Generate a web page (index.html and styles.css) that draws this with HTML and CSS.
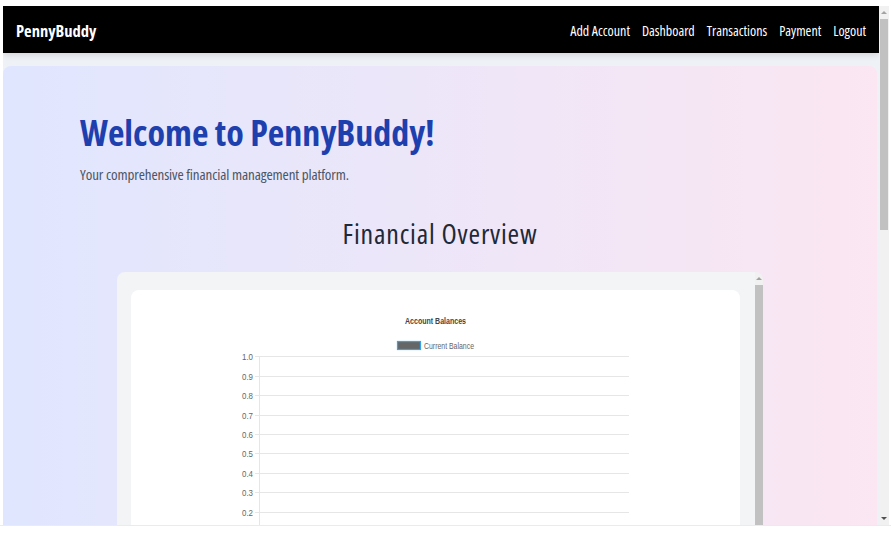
FILE: index.html
```html
<!DOCTYPE html>
<html lang="en">
<head>
<meta charset="utf-8">
<title>PennyBuddy</title>
<link rel="stylesheet" href="styles.css">
</head>
<body>
<div class="window">
  <div class="viewport">
    <nav class="navbar">
      <div class="brand">PennyBuddy</div>
      <ul class="links">
        <li>Add Account</li>
        <li>Dashboard</li>
        <li>Transactions</li>
        <li>Payment</li>
        <li>Logout</li>
      </ul>
    </nav>
    <main class="page">
      <section class="hero">
        <h1 class="hero-title">Welcome to PennyBuddy!</h1>
        <p class="hero-sub">Your comprehensive financial management platform.</p>
        <h2 class="section-title">Financial Overview</h2>
        <div class="chart-scroll">
          <div class="chart-card">
            <svg class="chart" width="609" height="260" viewBox="0 0 609 260">
              <text class="c-title" x="274" y="33.5" textLength="61" lengthAdjust="spacingAndGlyphs">Account Balances</text>
              <rect x="266.5" y="51.5" width="23" height="8" fill="#666" stroke="#36a2eb" stroke-width="1.2"/>
              <text class="c-label" x="293" y="58.5" textLength="50" lengthAdjust="spacingAndGlyphs">Current Balance</text>
              <g stroke="#e6e6e6" stroke-width="1">
                <line x1="124" y1="66.5" x2="498" y2="66.5"/>
                <line x1="124" y1="86.5" x2="498" y2="86.5"/>
                <line x1="124" y1="105.5" x2="498" y2="105.5"/>
                <line x1="124" y1="125.5" x2="498" y2="125.5"/>
                <line x1="124" y1="144.5" x2="498" y2="144.5"/>
                <line x1="124" y1="163.5" x2="498" y2="163.5"/>
                <line x1="124" y1="183.5" x2="498" y2="183.5"/>
                <line x1="124" y1="202.5" x2="498" y2="202.5"/>
                <line x1="124" y1="222.5" x2="498" y2="222.5"/>
                <line x1="128.5" y1="66" x2="128.5" y2="260"/>
              </g>
              <g class="c-tick">
                <text x="111" y="69.5" textLength="11" lengthAdjust="spacingAndGlyphs">1.0</text>
                <text x="111" y="89.5" textLength="11" lengthAdjust="spacingAndGlyphs">0.9</text>
                <text x="111" y="108.5" textLength="11" lengthAdjust="spacingAndGlyphs">0.8</text>
                <text x="111" y="128.5" textLength="11" lengthAdjust="spacingAndGlyphs">0.7</text>
                <text x="111" y="147.5" textLength="11" lengthAdjust="spacingAndGlyphs">0.6</text>
                <text x="111" y="166.5" textLength="11" lengthAdjust="spacingAndGlyphs">0.5</text>
                <text x="111" y="186.5" textLength="11" lengthAdjust="spacingAndGlyphs">0.4</text>
                <text x="111" y="205.5" textLength="11" lengthAdjust="spacingAndGlyphs">0.3</text>
                <text x="111" y="225.5" textLength="11" lengthAdjust="spacingAndGlyphs">0.2</text>
              </g>
            </svg>
          </div>
          <div class="inner-scrollbar">
            <div class="arrow-up"></div>
            <div class="inner-thumb"></div>
          </div>
        </div>
      </section>
    </main>
  </div>
  <div class="scrollbar">
    <div class="arrow-up"></div>
    <div class="thumb"></div>
    <div class="track-rest"></div>
    <div class="arrow-down"></div>
  </div>
</div>
</body>
</html>
```
FILE: styles.css
```css
html, body {
  margin: 0;
  padding: 0;
  background: #ffffff;
  overflow: hidden;
}

.window {
  display: flex;
  height: 519px;
  padding: 6px 2px 0 3px;
  border-bottom: 1px solid #e6ebf7;
  font-family: "Open Sans", sans-serif;
  font-stretch: 75%;
}

.viewport {
  width: 876px;
  height: 519px;
  overflow: hidden;
  background: #eef1f6;
}

.navbar {
  height: 47px;
  background: #000000;
  color: #ffffff;
  display: flex;
  align-items: center;
  justify-content: space-between;
  padding: 0 13px 0 13px;
  box-shadow: 0 2px 6px rgba(0, 0, 0, 0.12);
  position: relative;
}

.brand {
  font-weight: 700;
  font-size: 16.5px;
  padding-top: 2px;
}

.links {
  display: flex;
  gap: 12px;
  list-style: none;
  margin: 0;
  padding: 2px 0 0 0;
  font-size: 14px;
}

.page {
  padding: 13px 2px 0 0;
}

.hero {
  height: 470px;
  border-radius: 8px 8px 0 0;
  background: linear-gradient(to right, #e0e6ff, #fbe6f2);
  padding: 44px 77px 0 77px;
  box-sizing: border-box;
}

.hero-title {
  margin: 0;
  font-weight: 700;
  font-size: 36px;
  line-height: 46px;
  color: #1e40af;
}

.hero-sub {
  margin: 8px 0 0 0;
  font-size: 15px;
  letter-spacing: -0.1px;
  color: #4b5563;
}

.section-title {
  margin: 33px 0 0 0;
  text-align: center;
  font-weight: 400;
  font-size: 28px;
  line-height: 32px;
  letter-spacing: 0.8px;
  color: #1f2937;
}

.chart-scroll {
  width: 646px;
  height: 260px;
  margin: 23px auto 0 auto;
  background: #f3f4f6;
  border-radius: 8px 8px 0 0;
  display: flex;
  padding: 18px 0 0 14px;
  box-sizing: border-box;
  overflow: hidden;
}

.chart-card {
  width: 609px;
  height: 300px;
  background: #ffffff;
  border-radius: 8px;
  flex: none;
}

.chart {
  display: block;
}

.c-title {
  font-family: "Liberation Sans", Arial, sans-serif;
  font-weight: 700;
  font-size: 9px;
  fill: #444;
}

.c-label, .c-tick {
  font-family: "Liberation Sans", Arial, sans-serif;
  font-size: 9px;
  fill: #666;
}

.inner-scrollbar {
  margin-left: 15px;
  margin-top: -18px;
  width: 8px;
  display: flex;
  flex-direction: column;
  align-items: center;
  background: #f1f1f1;
}

.inner-scrollbar .arrow-up {
  margin-top: 5px;
}

.inner-thumb {
  margin-top: 5px;
  width: 8px;
  flex: 1;
  background: #c1c1c1;
}

.arrow-up {
  width: 0;
  height: 0;
  border-left: 3px solid transparent;
  border-right: 3px solid transparent;
  border-bottom: 3px solid #a3a3a3;
}

.arrow-down {
  width: 0;
  height: 0;
  border-left: 3px solid transparent;
  border-right: 3px solid transparent;
  border-top: 3px solid #505050;
  margin-bottom: 5px;
}

.scrollbar {
  width: 10px;
  height: 519px;
  background: #f1f1f1;
  display: flex;
  flex-direction: column;
  align-items: center;
}

.scrollbar .arrow-up {
  margin-top: 5px;
}

.thumb {
  margin-top: 5px;
  width: 8px;
  height: 211px;
  background: #c1c1c1;
}

.track-rest {
  flex: 1;
}
```
